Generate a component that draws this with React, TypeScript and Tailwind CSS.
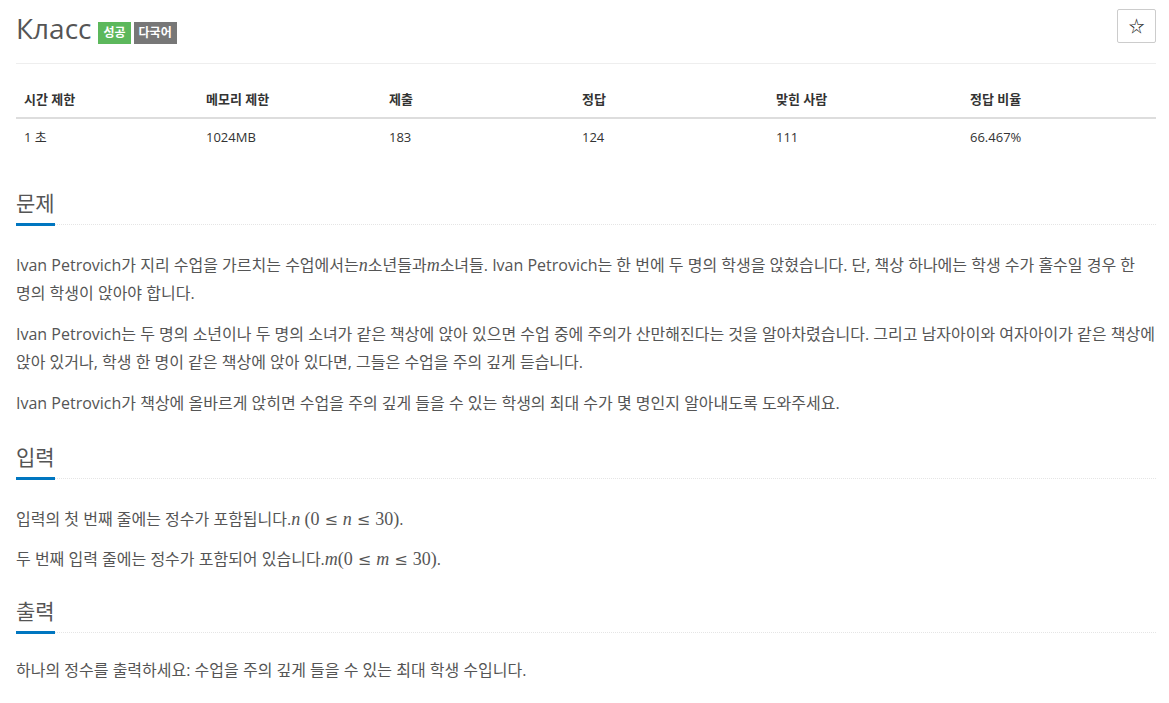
import { ReactNode } from "react";

const stats = [
  { label: "시간 제한", value: "1 초" },
  { label: "메모리 제한", value: "1024MB" },
  { label: "제출", value: "183" },
  { label: "정답", value: "124" },
  { label: "맞힌 사람", value: "111" },
  { label: "정답 비율", value: "66.467%" },
];

// inline math, KaTeX-ish look
const M = ({ children }: { children: ReactNode }) => (
  <span className="font-['Liberation_Serif',serif] text-[18px] italic">{children}</span>
);
const N = ({ children }: { children: ReactNode }) => (
  <span className="font-['Liberation_Serif',serif] text-[18px]">{children}</span>
);
const Le = () => <span className="font-['DejaVu_Serif',serif] text-[16px] mx-[5px]">≤</span>;

const Section = ({ title, top, gap, children }: { title: string; top: string; gap: string; children: ReactNode }) => (
  <section className={top}>
    <div className="border-b border-[#e5e5e5] border-dotted">
      <span className="inline-block text-[21px] leading-[22px] text-[#555] pb-[9px] border-b-[3px] border-[#0076c0] -mb-[2px]">
        {title}
      </span>
    </div>
    <div className={gap}>{children}</div>
  </section>
);

export default function App() {
  return (
    <div className="min-h-screen bg-white pl-4 pr-[13px] font-['Open_Sans','Noto_Sans_CJK_KR',sans-serif] text-[#555] break-keep">
      {/* Header */}
      <div className="flex items-start justify-between pt-[9px] pb-[19px] border-b border-[#eee]">
        <div className="flex items-center pt-[3px]">
          <h1 className="text-[28px] leading-[32px] text-[#555] mr-[7px]">Класс</h1>
          <span className="mt-[9px] mr-[3px] bg-[#5cb85c] text-white text-[12px] font-bold leading-[22px] px-[5px]">성공</span>
          <span className="mt-[9px] bg-[#777] text-white text-[12px] font-bold leading-[22px] px-[5px]">다국어</span>
        </div>
        <button className="w-[39px] h-[34px] border border-[#ccc] rounded-[2px] bg-white text-[#222] text-[16px] flex items-center justify-center">
          ☆
        </button>
      </div>

      {/* Stats table */}
      <div className="mt-[17px] text-[13px] text-[#333]">
        <div className="grid grid-cols-[182px_183px_193px_194px_194px_1fr] border-b-2 border-[#ddd]">
          {stats.map((s) => (
            <div key={s.label} className="px-2 py-2 leading-[20px] font-bold">
              {s.label}
            </div>
          ))}
        </div>
        <div className="grid grid-cols-[182px_183px_193px_194px_194px_1fr]">
          {stats.map((s) => (
            <div key={s.label} className="px-2 py-2 leading-[20px]">
              {s.value}
            </div>
          ))}
        </div>
      </div>

      <div className="text-[16px] leading-[28px]">
        <Section title="문제" top="mt-[36px]" gap="pt-[26px]">
          <p className="mb-[13px]">
            Ivan Petrovich가 지리 수업을 가르치는 수업에서는<M>n</M>소년들과<M>m</M>소녀들. Ivan Petrovich는 한 번에 두 명의 학생을 앉혔습니다. 단, 책상 하나에는 학생 수가 홀수일 경우 한 명의 학생이 앉아야 합니다.
          </p>
          <p className="mb-[13px]">
            Ivan Petrovich는 두 명의 소년이나 두 명의 소녀가 같은 책상에 앉아 있으면 수업 중에 주의가 산만해진다는 것을 알아차렸습니다. 그리고 남자아이와 여자아이가 같은 책상에 앉아 있거나, 학생 한 명이 같은 책상에 앉아 있다면, 그들은 수업을 주의 깊게 듣습니다.
          </p>
          <p>Ivan Petrovich가 책상에 올바르게 앉히면 수업을 주의 깊게 들을 수 있는 학생의 최대 수가 몇 명인지 알아내도록 도와주세요.</p>
        </Section>

        <Section title="입력" top="mt-[28px]" gap="pt-[26px]">
          <p className="mb-[11px]">
            입력의 첫 번째 줄에는 정수가 포함됩니다.<M>n</M> <N>(0</N><Le /><M>n</M><Le /><N>30)</N>.
          </p>
          <p>
            두 번째 입력 줄에는 정수가 포함되어 있습니다.<M>m</M><N>(0</N><Le /><M>m</M><Le /><N>30)</N>.
          </p>
        </Section>

        <Section title="출력" top="mt-[25px]" gap="pt-[23px]">
          <p>하나의 정수를 출력하세요: 수업을 주의 깊게 들을 수 있는 최대 학생 수입니다.</p>
        </Section>
      </div>
    </div>
  );
}
